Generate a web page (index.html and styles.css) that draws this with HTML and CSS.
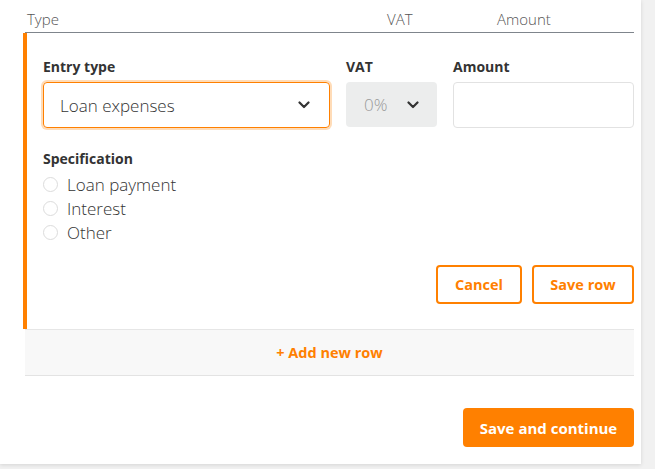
FILE: index.html
```html
<!DOCTYPE html>
<html>
<head>
<meta charset="utf-8">
<link rel="stylesheet" href="styles.css">
</head>
<body>
<div class="card">
  <div class="thead">
    <span class="th th-type">Type</span>
    <span class="th th-vat">VAT</span>
    <span class="th th-amount">Amount</span>
  </div>
  <div class="editor">
    <div class="fields">
      <div class="field">
        <label class="label">Entry type</label>
        <div class="select focus">
          <span class="value">Loan expenses</span>
          <svg class="chev" width="12" height="8" viewBox="0 0 12 8"><path d="M1.5 1.5 L6 6 L10.5 1.5" fill="none" stroke="#333" stroke-width="2.2" stroke-linecap="round" stroke-linejoin="round"/></svg>
        </div>
      </div>
      <div class="field">
        <label class="label">VAT</label>
        <div class="select disabled">
          <span class="value">0%</span>
          <svg class="chev" width="12" height="8" viewBox="0 0 12 8"><path d="M1.5 1.5 L6 6 L10.5 1.5" fill="none" stroke="#333" stroke-width="2.2" stroke-linecap="round" stroke-linejoin="round"/></svg>
        </div>
      </div>
      <div class="field">
        <label class="label">Amount</label>
        <div class="input"></div>
      </div>
    </div>
    <div class="spec">
      <div class="label">Specification</div>
      <div class="radio"><span class="circle"></span><span>Loan payment</span></div>
      <div class="radio"><span class="circle"></span><span>Interest</span></div>
      <div class="radio"><span class="circle"></span><span>Other</span></div>
    </div>
    <div class="actions">
      <button class="btn-outline">Cancel</button>
      <button class="btn-outline">Save row</button>
    </div>
  </div>
  <div class="addrow">+ Add new row</div>
  <div class="footer">
    <button class="btn-primary">Save and continue</button>
  </div>
</div>
</body>
</html>
```

FILE: styles.css
```css
* { box-sizing: border-box; }
html, body { margin: 0; padding: 0; }
body {
  background: #f1f1f1;
  font-family: "Open Sans", "Liberation Sans", sans-serif;
  color: #333;
  width: 655px;
  height: 469px;
  overflow: hidden;
}
.card {
  width: 641px;
  height: 464px;
  background: #fff;
  box-shadow: 0 1px 4px rgba(0,0,0,0.12);
  padding: 0 7px 0 25px;
}
.thead {
  height: 33px;
  border-bottom: 1px solid #7f858c;
  display: flex;
  align-items: flex-start;
  padding-top: 9px;
  font-size: 15px;
  line-height: 20px;
  font-weight: 300;
  color: #555;
}
.th-type { margin-left: 2px; width: 360px; }
.th-vat { width: 110px; }
.editor {
  margin-left: -2px;
  border-left: 4px solid #ff8000;
  padding: 24px 0 25px 16px;
}
.fields {
  display: grid;
  grid-template-columns: 287px 91px 181px;
  column-gap: 16px;
}
.label {
  display: block;
  font-size: 14px;
  font-weight: 700;
  color: #333;
  line-height: 20px;
  margin-bottom: 5px;
}
.select {
  height: 46px;
  border-radius: 4px;
  display: flex;
  align-items: center;
  justify-content: space-between;
  font-size: 17px;
  font-weight: 300;
}
.select.focus {
  border: 1px solid #ff8000;
  box-shadow: 0 0 0 2px #ffdcb8;
  padding: 0 19px 0 16px;
  color: #333;
}
.select.disabled {
  background: #eceded;
  padding: 0 18px 0 18px;
  color: #999;
  height: 45px;
}
.input {
  height: 46px;
  border: 1px solid #e2e2e2;
  border-radius: 4px;
}
.spec { margin-top: 21px; }
.spec .label { margin-bottom: 3px; }
.radio {
  display: flex;
  align-items: center;
  height: 24px;
  font-size: 17px;
  font-weight: 300;
  color: #333;
}
.circle {
  width: 15px;
  height: 15px;
  border: 1px solid #dcdcdc;
  border-radius: 50%;
  margin-right: 9px;
}
.actions {
  display: flex;
  justify-content: flex-end;
  gap: 10px;
  margin-top: 21px;
}
.btn-outline {
  font-family: inherit;
  height: 39px;
  padding: 0 10px;
  background: #fff;
  border: 2px solid #ff8000;
  border-radius: 4px;
  color: #ff8000;
  font-size: 14.5px;
  font-weight: 700;
}
.btn-outline:first-child { width: 86px; }
.btn-outline:last-child { width: 102px; }
.addrow {
  height: 47px;
  background: #f8f8f8;
  border-top: 1px solid #e6e6e6;
  border-bottom: 1px solid #e3e3e3;
  display: flex;
  align-items: center;
  justify-content: center;
  color: #ff8000;
  font-size: 14.5px;
  font-weight: 700;
}
.footer {
  display: flex;
  justify-content: flex-end;
  padding-top: 32px;
}
.btn-primary {
  font-family: inherit;
  width: 171px;
  height: 39px;
  background: #ff8000;
  color: #fff;
  border: none;
  border-radius: 4px;
  font-size: 15px;
  font-weight: 700;
}
```
